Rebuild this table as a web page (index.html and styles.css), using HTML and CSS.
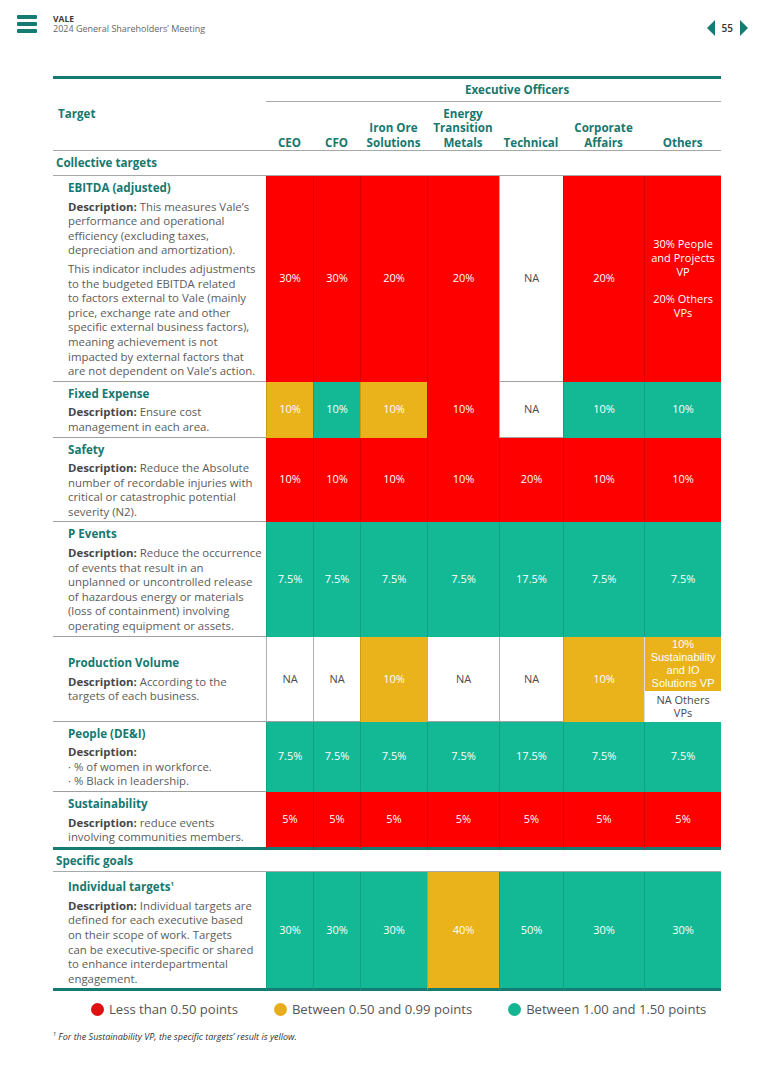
FILE: index.html
```html
<!DOCTYPE html>
<html lang="en">
<head>
<meta charset="utf-8">
<title>Vale – 2024 General Shareholders' Meeting</title>
<link rel="stylesheet" href="styles.css">
</head>
<body>
<header class="topbar">
  <div class="brand">
    <div class="menu"><span></span><span></span><span></span></div>
    <div class="brand-text">
      <div class="brand-name">VALE</div>
      <div class="brand-sub">2024 General Shareholders’ Meeting</div>
    </div>
  </div>
  <nav class="pager">
    <svg class="tri" width="8" height="16" viewBox="0 0 8 16"><polygon points="8,0 0,8 8,16"/></svg>
    <span class="page-num">55</span>
    <svg class="tri" width="8" height="16" viewBox="0 0 8 16"><polygon points="0,0 8,8 0,16"/></svg>
  </nav>
</header>

<main class="page">
  <table class="targets">
    <colgroup>
      <col class="c-label"><col class="c-ceo"><col class="c-cfo"><col class="c-iron"><col class="c-energy"><col class="c-tech"><col class="c-corp"><col class="c-others">
    </colgroup>
    <thead>
      <tr class="exec-row">
        <th rowspan="2" class="target-h">Target</th>
        <th colspan="7" class="exec-h">Executive Officers</th>
      </tr>
      <tr class="cols-row">
        <th>CEO</th>
        <th>CFO</th>
        <th>Iron Ore<br>Solutions</th>
        <th>Energy<br>Transition<br>Metals</th>
        <th>Technical</th>
        <th>Corporate<br>Affairs</th>
        <th>Others</th>
      </tr>
    </thead>
    <tbody>
      <tr class="section"><td colspan="8">Collective targets</td></tr>

      <tr>
        <td class="label">
          <div class="t-title">EBITDA (adjusted)</div>
          <p class="desc"><b>Description:</b> This measures Vale’s<br>performance and operational<br>efficiency (excluding taxes,<br>depreciation and amortization).</p>
          <p class="desc desc-2">This indicator includes adjustments<br>to the budgeted EBITDA related<br>to factors external to Vale (mainly<br>price, exchange rate and other<br>specific external business factors),<br>meaning achievement is not<br>impacted by external factors that<br>are not dependent on Vale’s action.</p>
        </td>
        <td class="v r">30%</td>
        <td class="v r">30%</td>
        <td class="v r">20%</td>
        <td class="v r">20%</td>
        <td class="v w">NA</td>
        <td class="v r">20%</td>
        <td class="v r"><p class="multi">30% People<br>and Projects<br>VP</p><p class="multi multi-2">20% Others<br>VPs</p></td>
      </tr>

      <tr>
        <td class="label">
          <div class="t-title">Fixed Expense</div>
          <p class="desc"><b>Description:</b> Ensure cost<br>management in each area.</p>
        </td>
        <td class="v y">10%</td>
        <td class="v g">10%</td>
        <td class="v y">10%</td>
        <td class="v r">10%</td>
        <td class="v w">NA</td>
        <td class="v g">10%</td>
        <td class="v g">10%</td>
      </tr>

      <tr>
        <td class="label">
          <div class="t-title">Safety</div>
          <p class="desc"><b>Description:</b> Reduce the Absolute<br>number of recordable injuries with<br>critical or catastrophic potential<br>severity (N2).</p>
        </td>
        <td class="v r">10%</td>
        <td class="v r">10%</td>
        <td class="v r">10%</td>
        <td class="v r">10%</td>
        <td class="v r">20%</td>
        <td class="v r">10%</td>
        <td class="v r">10%</td>
      </tr>

      <tr>
        <td class="label">
          <div class="t-title">P Events</div>
          <p class="desc"><b>Description:</b> Reduce the occurrence<br>of events that result in an<br>unplanned or uncontrolled release<br>of hazardous energy or materials<br>(loss of containment) involving<br>operating equipment or assets.</p>
        </td>
        <td class="v g">7.5%</td>
        <td class="v g">7.5%</td>
        <td class="v g">7.5%</td>
        <td class="v g">7.5%</td>
        <td class="v g">17.5%</td>
        <td class="v g">7.5%</td>
        <td class="v g">7.5%</td>
      </tr>

      <tr>
        <td class="label label-mid">
          <div class="t-title">Production Volume</div>
          <p class="desc"><b>Description:</b> According to the<br>targets of each business.</p>
        </td>
        <td class="v w">NA</td>
        <td class="v w">NA</td>
        <td class="v y">10%</td>
        <td class="v w">NA</td>
        <td class="v w">NA</td>
        <td class="v y">10%</td>
        <td class="v split">
          <div class="split-top">10%<br>Sustainability<br>and IO<br>Solutions VP</div>
          <div class="split-bottom">NA Others<br>VPs</div>
        </td>
      </tr>

      <tr>
        <td class="label">
          <div class="t-title">People (DE&amp;I)</div>
          <p class="desc"><b>Description:</b><br>· % of women in workforce.<br>· % Black in leadership.</p>
        </td>
        <td class="v g">7.5%</td>
        <td class="v g">7.5%</td>
        <td class="v g">7.5%</td>
        <td class="v g">7.5%</td>
        <td class="v g">17.5%</td>
        <td class="v g">7.5%</td>
        <td class="v g">7.5%</td>
      </tr>

      <tr class="end-block">
        <td class="label">
          <div class="t-title">Sustainability</div>
          <p class="desc"><b>Description:</b> reduce events<br>involving communities members.</p>
        </td>
        <td class="v r">5%</td>
        <td class="v r">5%</td>
        <td class="v r">5%</td>
        <td class="v r">5%</td>
        <td class="v r">5%</td>
        <td class="v r">5%</td>
        <td class="v r">5%</td>
      </tr>

      <tr class="section section-tight"><td colspan="8">Specific goals</td></tr>

      <tr class="end-block">
        <td class="label">
          <div class="t-title">Individual targets<sup>1</sup></div>
          <p class="desc"><b>Description:</b> Individual targets are<br>defined for each executive based<br>on their scope of work. Targets<br>can be executive-specific or shared<br>to enhance interdepartmental<br>engagement.</p>
        </td>
        <td class="v g">30%</td>
        <td class="v g">30%</td>
        <td class="v g">30%</td>
        <td class="v y">40%</td>
        <td class="v g">50%</td>
        <td class="v g">30%</td>
        <td class="v g">30%</td>
      </tr>
    </tbody>
  </table>

  <ul class="legend">
    <li><span class="dot dot-r"></span>Less than 0.50 points</li>
    <li><span class="dot dot-y"></span>Between 0.50 and 0.99 points</li>
    <li><span class="dot dot-g"></span>Between 1.00 and 1.50 points</li>
  </ul>

  <p class="footnote"><sup>1</sup> For the Sustainability VP, the specific targets’ result is yellow.</p>
</main>
</body>
</html>
```

FILE: styles.css
```css
* { box-sizing: border-box; }

body {
  margin: 0;
  background: #ffffff;
  font-family: "Open Sans", "Noto Sans", sans-serif;
  color: #555555;
}

/* ---------- top bar ---------- */
.topbar {
  display: flex;
  justify-content: space-between;
  align-items: flex-start;
  height: 76px;
  padding: 14px 18px 0 17px;
}
.brand { display: flex; gap: 16px; }
.menu {
  display: flex;
  flex-direction: column;
  gap: 3px;
  padding-top: 1px;
}
.menu span {
  display: block;
  width: 20px;
  height: 4px;
  background: #167b72;
  border-radius: 1px;
}
.brand-text { padding-top: 0; }
.brand-name {
  font-size: 8.5px;
  font-weight: 700;
  color: #3a3a3a;
  line-height: 10px;
}
.brand-sub {
  font-size: 9px;
  color: #666666;
  line-height: 10px;
}
.pager {
  display: flex;
  align-items: center;
  gap: 7px;
  padding-top: 6px;
}
.tri { fill: #167b72; display: block; }
.page-num {
  font-size: 10px;
  font-weight: 600;
  color: #333333;
}

/* ---------- table ---------- */
.page { padding-left: 53px; }

.targets {
  width: 668px;
  border-collapse: separate;
  border-spacing: 0;
  table-layout: fixed;
}
.c-label  { width: 213px; }
.c-ceo    { width: 47px; }
.c-cfo    { width: 47px; }
.c-iron   { width: 67px; }
.c-energy { width: 72px; }
.c-tech   { width: 64px; }
.c-corp   { width: 81px; }
.c-others { width: 77px; }

th {
  color: #16786f;
  font-size: 11.6px;
  font-weight: 700;
  line-height: 14.5px;
  text-align: center;
  padding: 0;
}
.exec-row th { border-top: 3px solid #167b72; }
.target-h {
  text-align: left;
  vertical-align: middle;
  padding-left: 5px;
  border-bottom: 1px solid #a8a8a8;
}
.exec-h {
  padding: 4px 0 3px 47px;
  border-bottom: 1px solid #a8a8a8;
}
.cols-row th {
  vertical-align: bottom;
  padding: 5px 0 0;
  border-bottom: 1px solid #a8a8a8;
}

.section td {
  color: #16786f;
  font-size: 11.6px;
  font-weight: 700;
  line-height: 14.5px;
  padding: 5px 3px 4.5px;
  border-bottom: 1px solid #a8a8a8;
}
.section-tight td { padding: 4px 3px 3px; }

.label {
  vertical-align: top;
  padding: 5px 4px 2px 15px;
  border-bottom: 1px solid #a0a0a0;
}
.label-mid { vertical-align: middle; }
.t-title {
  color: #16786f;
  font-size: 11.6px;
  font-weight: 700;
  line-height: 14.6px;
  margin-bottom: 4px;
}
.t-title sup { font-size: 6px; vertical-align: 5px; }
.desc {
  margin: 0;
  font-size: 11.4px;
  line-height: 14.6px;
  color: #5c5c5c;
  white-space: nowrap;
}
.desc b { color: #474747; font-weight: 700; }
.desc-2 { margin-top: 4px; }

.v {
  text-align: center;
  vertical-align: middle;
  font-size: 11px;
  line-height: 14px;
  color: #ffffff;
  padding: 0 2px;
  border-left: 1px solid rgba(0, 0, 0, 0.13);
  border-bottom: 1px solid transparent;
}
.r { background: #fe0000; }
.y { background: #eab21b; }
.g { background: #12b994; }
.w {
  background: #ffffff;
  color: #4a4a4a;
  border-left-color: #b0b0b0;
  border-bottom-color: #a0a0a0;
}

.multi { margin: 0; }
.multi-2 { margin-top: 13px; }

.split {
  padding: 0;
  vertical-align: top;
}
.split-top {
  height: 54px;
  background: #eab21b;
  color: #ffffff;
  font-family: "Liberation Sans", Arial, sans-serif;
  font-size: 11px;
  line-height: 13px;
  display: flex;
  align-items: center;
  justify-content: center;
}
.split-bottom {
  height: 30px;
  color: #4a4a4a;
  font-size: 11px;
  line-height: 13px;
  display: flex;
  align-items: center;
  justify-content: center;
}

.end-block td { border-bottom: 3px solid #167b72; }

/* ---------- legend ---------- */
.legend {
  list-style: none;
  margin: 10px 0 0;
  padding: 0 0 0 38px;
  display: flex;
  gap: 36px;
}
.legend li {
  display: flex;
  align-items: center;
  gap: 5px;
  font-size: 13.1px;
  line-height: 17px;
  color: #555555;
}
.dot {
  width: 13px;
  height: 13px;
  border-radius: 50%;
  display: block;
}
.dot-r { background: #e01010; }
.dot-y { background: #e8ad1c; }
.dot-g { background: #14b692; }

.footnote {
  margin: 12px 0 0;
  font-size: 9px;
  font-style: italic;
  color: #333333;
}
.footnote sup { font-size: 5.5px; vertical-align: 4px; }
```
